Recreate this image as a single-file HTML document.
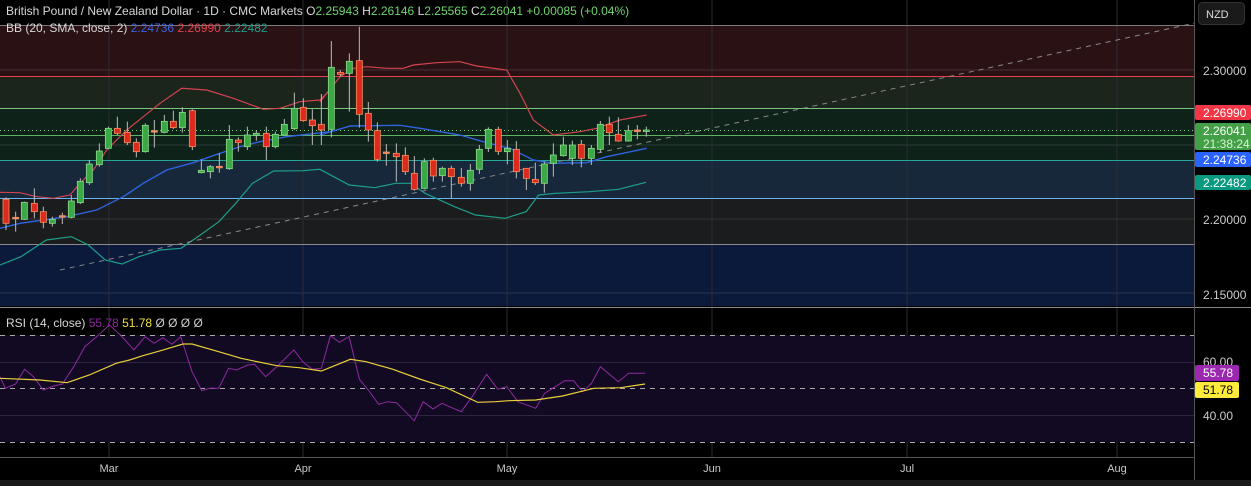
<!DOCTYPE html>
<html><head><meta charset="utf-8"><style>
body{margin:0;background:#000;width:1251px;height:486px;overflow:hidden;font-family:"Liberation Sans",sans-serif}
svg{display:block}
</style></head><body>
<svg id="s" width="1251" height="486" xmlns="http://www.w3.org/2000/svg" font-family="Liberation Sans, sans-serif">
<rect width="1251" height="486" fill="#000"/>
<rect x="0" y="25" width="1195" height="51" fill="#2a1114"/>
<rect x="0" y="76" width="1195" height="32" fill="#1b251b"/>
<rect x="0" y="108" width="1195" height="52" fill="#0e2219"/>
<rect x="0" y="160" width="1195" height="38" fill="#16283a"/>
<rect x="0" y="198" width="1195" height="46" fill="#1b1c1e"/>
<rect x="0" y="244" width="1195" height="62" fill="#0b1a3a"/>
<g stroke-width="1">
<line x1="0" y1="70" x2="1195" y2="70" stroke="#4a3035"/>
<line x1="0" y1="145" x2="1195" y2="145" stroke="#2c3a38"/>
<line x1="0" y1="219" x2="1195" y2="219" stroke="#333"/>
<line x1="0" y1="293" x2="1195" y2="293" stroke="#2a3550"/>
<line x1="109" y1="0" x2="109" y2="457" stroke="#2c2c34"/>
<line x1="303" y1="0" x2="303" y2="457" stroke="#2c2c34"/>
<line x1="507" y1="0" x2="507" y2="457" stroke="#2c2c34"/>
<line x1="712" y1="0" x2="712" y2="457" stroke="#2c2c34"/>
<line x1="907" y1="0" x2="907" y2="457" stroke="#2c2c34"/>
<line x1="1117" y1="0" x2="1117" y2="457" stroke="#2c2c34"/>
<line x1="0" y1="25.5" x2="1195" y2="25.5" stroke="#7a7a7a"/>
<line x1="0" y1="76.5" x2="1195" y2="76.5" stroke="#e0434f"/>
<line x1="0" y1="108.5" x2="1195" y2="108.5" stroke="#7cc77c"/>
<line x1="0" y1="135.5" x2="1195" y2="135.5" stroke="#5fb25f"/>
<line x1="0" y1="160.5" x2="1195" y2="160.5" stroke="#26a69a"/>
<line x1="0" y1="198.5" x2="1195" y2="198.5" stroke="#6cb2ee"/>
<line x1="0" y1="244.5" x2="1195" y2="244.5" stroke="#8a8a8a"/>
<line x1="0" y1="130.5" x2="1195" y2="130.5" stroke="#7cd27c" stroke-dasharray="1 3"/>
</g>
<g id="bands" fill="none" stroke-width="1.2"></g>
<line x1="60" y1="270" x2="1195" y2="23" stroke="#888" stroke-dasharray="5 5"/>
<g id="candles"></g>
<!-- RSI pane -->
<line x1="0" y1="307.5" x2="1251" y2="307.5" stroke="#888"/>
<rect x="0" y="335" width="1195" height="107" fill="#120a22"/>
<line x1="0" y1="362.5" x2="1195" y2="362.5" stroke="#2e2440"/>
<line x1="0" y1="415.5" x2="1195" y2="415.5" stroke="#2e2440"/>
<g stroke="#aaa" stroke-dasharray="5 5">
<line x1="0" y1="335.5" x2="1195" y2="335.5"/>
<line x1="0" y1="388.5" x2="1195" y2="388.5"/>
<line x1="0" y1="442.5" x2="1195" y2="442.5"/>
</g>
<g id="rsi" fill="none"></g>
<line x1="0" y1="457.5" x2="1195" y2="457.5" stroke="#555"/>
<line x1="1194.5" y1="0" x2="1194.5" y2="486" stroke="#555"/>
<rect x="0" y="480" width="1251" height="6" fill="#1a1a1a"/>
<g fill="#c8c8c8" font-size="11" text-anchor="middle">
<text x="109" y="472">Mar</text><text x="303" y="472">Apr</text><text x="507" y="472">May</text>
<text x="712" y="472">Jun</text><text x="907" y="472">Jul</text><text x="1117" y="472">Aug</text>
</g>
<!-- price axis -->
<rect x="1198.5" y="2.5" width="46" height="22" rx="4" fill="#1a1a1a" stroke="#333"/>
<text x="1206" y="18" fill="#ddd" font-size="11">NZD</text>
<g fill="#ccc" font-size="12">
<text x="1203" y="75">2.30000</text><text x="1203" y="224">2.20000</text><text x="1203" y="299">2.15000</text>
<text x="1203" y="366">60.00</text><text x="1203" y="420">40.00</text>
</g>
<rect x="1195" y="105" width="56" height="15" rx="2" fill="#f23645"/>
<text x="1203" y="117" fill="#fff" font-size="12">2.26990</text>
<rect x="1195" y="123" width="56" height="27" rx="2" fill="#43a047"/>
<text x="1203" y="135" fill="#fff" font-size="12">2.26041</text>
<text x="1203" y="148" fill="#d8f0d8" font-size="12">21:38:24</text>
<rect x="1195" y="152" width="56" height="15" rx="2" fill="#2962ff"/>
<text x="1203" y="164" fill="#fff" font-size="12">2.24736</text>
<rect x="1195" y="175" width="56" height="15" rx="2" fill="#089981"/>
<text x="1203" y="187" fill="#fff" font-size="12">2.22482</text>
<rect x="1195" y="365" width="44" height="16" rx="2" fill="#9c27b0"/>
<text x="1203" y="377" fill="#fff" font-size="12">55.78</text>
<rect x="1195" y="382" width="44" height="16" rx="2" fill="#ffeb3b"/>
<text x="1203" y="394" fill="#000" font-size="12">51.78</text>
<!-- legends -->
<text x="6" y="15" font-size="12" fill="#d8d8d8">British Pound / New Zealand Dollar · 1D · CMC Markets <tspan fill="#d8d8d8">O</tspan><tspan fill="#6fd46f">2.25943</tspan> <tspan fill="#d8d8d8">H</tspan><tspan fill="#6fd46f">2.26146</tspan> <tspan fill="#d8d8d8">L</tspan><tspan fill="#6fd46f">2.25565</tspan> <tspan fill="#d8d8d8">C</tspan><tspan fill="#6fd46f">2.26041</tspan> <tspan fill="#6fd46f">+0.00085 (+0.04%)</tspan></text>
<text x="6" y="32" font-size="12" fill="#d8d8d8">BB (20, SMA, close, 2) <tspan fill="#3d63e0">2.24736</tspan> <tspan fill="#e0434f">2.26990</tspan> <tspan fill="#1e9e8a">2.22482</tspan></text>
<text x="6" y="327" font-size="12" fill="#d8d8d8">RSI (14, close) <tspan fill="#8e2aa0">55.78</tspan> <tspan fill="#f0e040">51.78</tspan> <tspan fill="#ccc">Ø Ø Ø Ø</tspan></text>
</svg>
<script>
var NS="http://www.w3.org/2000/svg";
function el(p,t,a){var e=document.createElementNS(NS,t);for(var k in a)e.setAttribute(k,a[k]);p.appendChild(e);return e;}
function pl(p,pts,sx,ox,sy,oy,col,w){var s=pts.map(function(q){return (q[0]/sx+ox).toFixed(1)+","+(q[1]/sy+oy).toFixed(1)}).join(" ");el(p,"polyline",{points:s,stroke:col,"stroke-width":w,fill:"none"});}
var b=document.getElementById("bands");
pl(b,[[0,517],[60,518],[110,530],[160,535],[210,525],[240,490],[280,450],[320,390],[380,330],[430,290],[480,250],[545,205],[620,210],[700,235],[790,268],[840,265],[900,245],[960,240],[990,210]],3,0,3,20,"#d2434f",1.2);
pl(b,[[0,245],[60,170],[100,145],[140,140],[200,145],[250,145],[280,135],[350,128],[420,125],[470,138],[560,150],[600,220],[640,300],[700,345],[780,335],[830,325],[900,300],[980,285]],3,320,3,20,"#d2434f",1.2);
pl(b,[[0,625],[60,610],[130,600],[200,590],[290,570],[370,530],[430,490],[500,450],[580,428],[660,400],[720,380],[780,365],[860,350],[990,335]],3,0,3,20,"#2f63e0",1.4);
pl(b,[[0,345],[90,318],[240,316],[300,325],[420,345],[500,368],[570,385],[640,420],[700,430],[800,428],[860,410],[980,385]],3,320,3,20,"#2f63e0",1.4);
pl(b,[[0,735],[50,710],[110,660],[170,650],[210,675],[250,720],[290,732],[330,710],[380,690],[430,685],[470,650],[520,605],[560,550],[600,490],[650,453],[720,452],[760,448],[800,475],[830,495],[890,503],[940,490],[975,490],[1010,520],[1080,560],[1130,585],[1200,595],[1250,575],[1280,525],[1320,520],[1400,515],[1470,508],[1535,487]],2.376,0,3,20,"#1e9e8a",1.2);
// candles: x, open/close top, bottom, wickTop, wickBot (zoom coords), g/r/d
var c4=[[18,538,610,532,630,"r"],[47,592,595,575,635,"d"],[73,547,598,545,600,"g"],[103,550,575,505,595,"r"],[130,575,607,560,625,"r"],[157,598,610,590,620,"g"],[187,587,590,578,612,"d"],[214,543,592,525,595,"g"],[241,484,548,475,552,"g"],[268,432,488,420,495,"g"],[298,393,434,370,440,"g"],[325,325,385,320,388,"g"],[352,325,340,290,345,"r"],[382,337,368,305,375,"r"],[409,367,395,355,412,"r"],[436,316,395,310,398,"g"],[463,332,335,300,383,"d"],[493,304,337,285,340,"g"],[520,304,323,272,327,"r"],[547,277,323,262,338,"g"],[577,272,380,268,390,"r"],[604,451,458,418,460,"g"],[631,440,455,435,475,"g"],[658,439,442,400,458,"d"],[688,358,446,315,450,"g"],[715,360,368,352,395,"r"],[742,345,380,320,390,"g"],[769,340,346,330,362,"g"],[799,340,380,320,420,"r"],[826,343,380,335,385,"g"],[853,313,345,297,347,"g"],[883,265,326,218,330,"g"],[910,262,302,235,305,"r"],[937,300,317,268,375,"r"],[964,313,330,222,375,"r"]];
var c5=[[34,142,328,63,352,"g"],[61,157,163,150,170,"r"],[88,124,160,100,275,"g"],[118,122,283,20,323,"r"],[145,280,330,246,365,"r"],[172,332,418,307,425,"r"],[199,396,399,372,437,"d"],[229,400,410,370,485,"r"],[256,406,455,382,465,"r"],[283,460,508,408,512,"r"],[313,425,505,415,508,"g"],[340,421,468,413,485,"r"],[367,445,467,440,485,"g"],[394,445,470,437,535,"r"],[424,472,490,444,500,"r"],[451,451,490,432,512,"g"],[478,388,448,375,462,"g"],[505,328,385,322,396,"g"],[535,328,394,320,405,"r"],[562,385,395,360,433,"g"],[589,388,455,363,475,"r"],[619,445,475,445,510,"r"],[646,478,488,428,495,"r"],[673,432,490,425,518,"g"],[700,405,430,370,470,"g"],[730,375,407,350,410,"g"],[757,375,415,362,435,"g"],[784,373,415,360,442,"r"],[814,385,415,375,435,"g"],[841,313,388,303,398,"g"],[868,313,338,290,375,"r"],[895,343,363,292,365,"r"],[925,332,363,315,365,"g"],[952,330,333,315,358,"d"],[979,330,333,320,350,"g"]];
var cg=document.getElementById("candles");
function draw(arr,ox){arr.forEach(function(k){var x=k[0]/3+ox,t=k[1]/3+20,bt=k[2]/3+20,wt=k[3]/3+20,wb=k[4]/3+20;
el(cg,"line",{x1:x,y1:wt,x2:x,y2:wb,stroke:"#bbb","stroke-width":1});
var f=k[5]=="g"?"#3aa845":k[5]=="r"?"#dd2a1e":"#e88a6a",s=k[5]=="g"?"#8bd98b":"#f5905f";
var h=Math.max(bt-t,1.5);el(cg,"rect",{x:x-3,y:t,width:6,height:h,fill:f,stroke:s,"stroke-width":0.8});});}
draw(c4,0);draw(c5,320);
var r=document.getElementById("rsi");
pl(r,[[0,215],[12,250],[35,237],[55,193],[75,215],[97,255],[120,243],[140,237],[165,185],[190,125],[215,97],[245,60],[270,90],[300,135],[325,95],[345,115],[365,98],[385,118],[405,95],[430,200],[452,257],[470,250],[490,250],[512,190],[530,195],[555,180],[570,178],[595,215],[620,185],[658,135],[680,173],[700,193],[720,190],[740,92],[760,112],[782,95],[805,223],[825,255],[848,298],[868,290],[888,293],[908,320],[928,347],[948,290],[970,312],[990,295],[1010,307],[1033,320],[1055,280],[1090,208],[1115,253],[1135,245],[1160,290],[1200,310],[1220,265],[1265,227],[1285,227],[1305,260],[1325,235],[1345,185],[1385,230],[1408,205],[1445,205]],2.24,0,3,305,"#8e2aa0",1);
pl(r,[[0,220],[90,225],[150,233],[200,210],[260,175],[290,165],[320,152],[360,137],[410,117],[430,117],[490,140],[540,160],[620,182],[670,188],[720,198],[785,163],[820,170],[880,193],[940,222],[1000,248],[1070,292],[1110,290],[1140,287],[1200,285],[1260,273],[1330,250],[1390,248],[1445,237]],2.24,0,3,305,"#e8cf3a",1.2);
</script>
</body></html>
